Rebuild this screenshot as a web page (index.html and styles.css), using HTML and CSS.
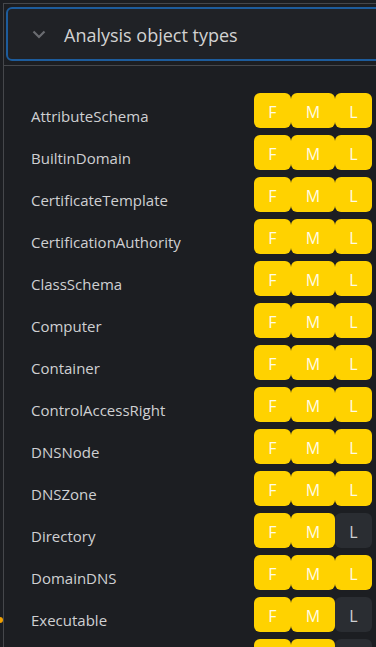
FILE: index.html
```html
<!DOCTYPE html>
<html>
<head>
<meta charset="utf-8">
<link rel="stylesheet" href="styles.css">
</head>
<body>
<div class="panel">
  <div class="head-wrap">
    <div class="head">
      <svg class="chev" width="14" height="9" viewBox="0 0 14 9"><path d="M1.5 1.5 L7 7 L12.5 1.5" fill="none" stroke="#6a6c70" stroke-width="2.2"/></svg>
      <span class="title">Analysis object types</span>
    </div>
  </div>
  <div class="list">
    <div class="row"><span class="label">AttributeSchema</span><div class="btns"><span class="b f on">F</span><span class="b m on">M</span><span class="b l on">L</span></div></div>
    <div class="row"><span class="label">BuiltinDomain</span><div class="btns"><span class="b f on">F</span><span class="b m on">M</span><span class="b l on">L</span></div></div>
    <div class="row"><span class="label">CertificateTemplate</span><div class="btns"><span class="b f on">F</span><span class="b m on">M</span><span class="b l on">L</span></div></div>
    <div class="row"><span class="label">CertificationAuthority</span><div class="btns"><span class="b f on">F</span><span class="b m on">M</span><span class="b l on">L</span></div></div>
    <div class="row"><span class="label">ClassSchema</span><div class="btns"><span class="b f on">F</span><span class="b m on">M</span><span class="b l on">L</span></div></div>
    <div class="row"><span class="label">Computer</span><div class="btns"><span class="b f on">F</span><span class="b m on">M</span><span class="b l on">L</span></div></div>
    <div class="row"><span class="label">Container</span><div class="btns"><span class="b f on">F</span><span class="b m on">M</span><span class="b l on">L</span></div></div>
    <div class="row"><span class="label">ControlAccessRight</span><div class="btns"><span class="b f on">F</span><span class="b m on">M</span><span class="b l on">L</span></div></div>
    <div class="row"><span class="label">DNSNode</span><div class="btns"><span class="b f on">F</span><span class="b m on">M</span><span class="b l on">L</span></div></div>
    <div class="row"><span class="label">DNSZone</span><div class="btns"><span class="b f on">F</span><span class="b m on">M</span><span class="b l on">L</span></div></div>
    <div class="row"><span class="label">Directory</span><div class="btns"><span class="b f on">F</span><span class="b m on">M</span><span class="b l">L</span></div></div>
    <div class="row"><span class="label">DomainDNS</span><div class="btns"><span class="b f on">F</span><span class="b m on">M</span><span class="b l on">L</span></div></div>
    <div class="row"><span class="label">Executable</span><div class="btns"><span class="b f on">F</span><span class="b m on">M</span><span class="b l">L</span></div></div>
    <div class="row"><span class="label"></span><div class="btns"><span class="b f on"></span><span class="b m on"></span><span class="b l"></span></div></div>
  </div>
  <span class="marker"></span>
</div>
</body>
</html>
```

FILE: styles.css
```css
html, body {
  margin: 0;
  padding: 0;
  background: #1c1e22;
  overflow: hidden;
  height: 647px;
}
body {
  font-family: "Open Sans", "Noto Sans", sans-serif;
}
.panel {
  position: relative;
  margin: 3px 0 0 3px;
  border-left: 1px solid #45474b;
  border-top: 1px solid #45474b;
  height: 700px;
}
.head-wrap {
  padding: 3px 0 4px 2px;
  border-bottom: 1px solid #45474b;
  margin-right: -20px;
}
.head {
  height: 50px;
  border: 2px solid #1d5c9c;
  border-radius: 6px;
  background: #202226;
  display: flex;
  align-items: center;
}
.chev {
  margin-left: 24px;
  margin-top: 1px;
}
.title {
  margin-left: 18px;
  color: #d2d2d2;
  font-size: 18px;
  margin-top: 1px;
}
.list {
  padding-top: 27px;
  display: flex;
  flex-direction: column;
  gap: 7px;
}
.row {
  display: flex;
  align-items: center;
  height: 35px;
}
.label {
  flex: 1;
  padding-left: 27px;
  padding-top: 10px;
  color: #cfd0d2;
  font-size: 15px;
}
.btns {
  display: flex;
  margin-right: 4px;
}
.b {
  height: 35px;
  box-sizing: border-box;
  padding-top: 3px;
  border-radius: 6px;
  display: flex;
  align-items: center;
  justify-content: center;
  font-size: 16px;
  color: #cfd0d2;
  background: #2a2d32;
}
.b.on {
  background: #ffd200;
  color: #fffbe6;
}
.f { width: 37px; }
.m { width: 44px; }
.l { width: 37px; }
.marker {
  position: absolute;
  left: -4px;
  top: 613px;
  width: 3px;
  height: 6px;
  background: #f0a000;
  border-radius: 0 3px 3px 0;
}
```
